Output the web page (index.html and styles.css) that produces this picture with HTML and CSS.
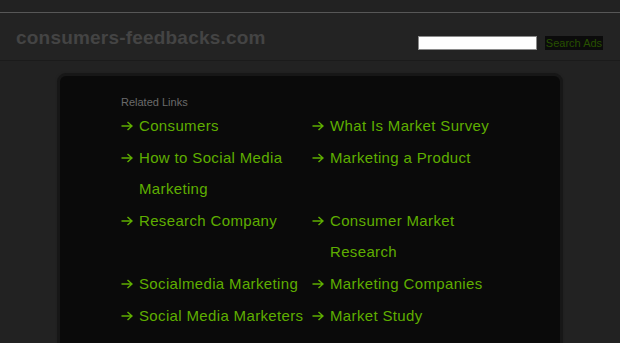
FILE: index.html
```html
<!DOCTYPE html>
<html>
<head>
<meta charset="utf-8">
<link rel="stylesheet" href="styles.css">
</head>
<body>
<div class="topbar"></div>
<header class="header">
  <div class="logo">consumers-feedbacks.com</div>
  <form class="search">
    <input class="search-input" type="text">
    <button class="search-btn" type="button">Search Ads</button>
  </form>
</header>
<main class="content">
  <div class="panel">
    <div class="related-title">Related Links</div>
    <ul class="links">
      <li class="link"><svg class="arrow" viewBox="0 0 12 10"><path d="M0.5 5H11M6.5 1L11 5L6.5 9"/></svg><span class="text">Consumers</span></li>
      <li class="link"><svg class="arrow" viewBox="0 0 12 10"><path d="M0.5 5H11M6.5 1L11 5L6.5 9"/></svg><span class="text">What Is Market Survey</span></li>
      <li class="link"><svg class="arrow" viewBox="0 0 12 10"><path d="M0.5 5H11M6.5 1L11 5L6.5 9"/></svg><span class="text">How to Social Media Marketing</span></li>
      <li class="link"><svg class="arrow" viewBox="0 0 12 10"><path d="M0.5 5H11M6.5 1L11 5L6.5 9"/></svg><span class="text">Marketing a Product</span></li>
      <li class="link"><svg class="arrow" viewBox="0 0 12 10"><path d="M0.5 5H11M6.5 1L11 5L6.5 9"/></svg><span class="text">Research Company</span></li>
      <li class="link"><svg class="arrow" viewBox="0 0 12 10"><path d="M0.5 5H11M6.5 1L11 5L6.5 9"/></svg><span class="text">Consumer Market Research</span></li>
      <li class="link"><svg class="arrow" viewBox="0 0 12 10"><path d="M0.5 5H11M6.5 1L11 5L6.5 9"/></svg><span class="text">Socialmedia Marketing</span></li>
      <li class="link"><svg class="arrow" viewBox="0 0 12 10"><path d="M0.5 5H11M6.5 1L11 5L6.5 9"/></svg><span class="text">Marketing Companies</span></li>
      <li class="link"><svg class="arrow" viewBox="0 0 12 10"><path d="M0.5 5H11M6.5 1L11 5L6.5 9"/></svg><span class="text">Social Media Marketers</span></li>
      <li class="link"><svg class="arrow" viewBox="0 0 12 10"><path d="M0.5 5H11M6.5 1L11 5L6.5 9"/></svg><span class="text">Market Study</span></li>
    </ul>
  </div>
</main>
</body>
</html>
```

FILE: styles.css
```css
html, body {
  margin: 0;
  padding: 0;
  background: #222222;
  font-family: "Liberation Sans", Arial, sans-serif;
  overflow: hidden;
}

.topbar {
  height: 12px;
  border-bottom: 1px solid #575757;
  background: #222222;
}

.header {
  height: 47px;
  border-bottom: 1px solid #1b1b1b;
  background: #232323;
  display: flex;
  justify-content: space-between;
  align-items: flex-start;
  padding: 0 17px 0 16px;
}

.logo {
  margin-top: 14px;
  font-size: 19px;
  line-height: 22px;
  font-weight: bold;
  letter-spacing: 0.2px;
  color: #444444;
}

.search {
  margin: 23px 0 0 0;
  display: flex;
  align-items: center;
  gap: 8px;
}

.search-input {
  width: 115px;
  height: 10px;
  margin: 0;
  padding: 1px;
  border: 1px solid #8a8a8a;
  background: #ffffff;
}

.search-btn {
  width: 58px;
  height: 14px;
  margin: 0;
  padding: 0;
  border: 0;
  background: #0b0b0b;
  color: #285000;
  font-family: "Liberation Sans", Arial, sans-serif;
  font-size: 11px;
  line-height: 14px;
}

.content {
  padding: 12px 0 0 57px;
}

.panel {
  width: 439px;
  height: 300px;
  background: #0a0a0a;
  border: 3px solid #171717;
  border-radius: 9px;
  box-shadow: 0 0 2px #1d1d1d;
  padding: 20px 0 0 61px;
  box-sizing: content-box;
}

.related-title {
  font-size: 11px;
  line-height: 13px;
  color: #6a6a6a;
  margin-bottom: 1px;
}

.links {
  list-style: none;
  margin: 0;
  padding: 0;
  display: grid;
  grid-template-columns: 191px 200px;
}

.link {
  display: flex;
  align-items: flex-start;
  font-size: 15px;
  line-height: 31.6px;
  letter-spacing: 0.35px;
  color: #5fae00;
}

.arrow {
  width: 12px;
  height: 10px;
  flex: none;
  margin: 11px 6px 0 0;
  fill: none;
  stroke: #5fae00;
  stroke-width: 1.5;
}

.text {
  width: 172px;
}
```
